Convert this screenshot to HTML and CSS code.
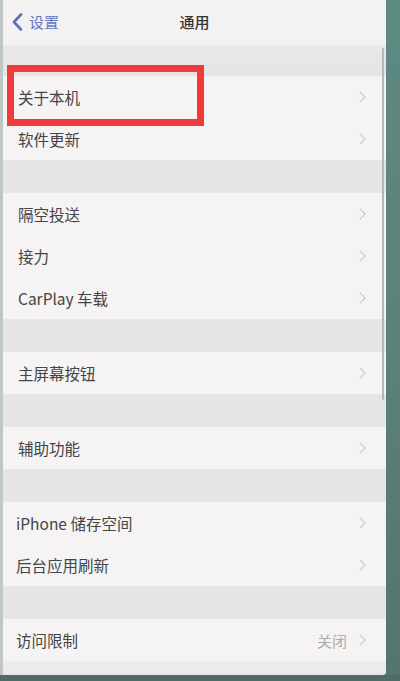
FILE: index.html
```html
<!DOCTYPE html>
<html lang="zh">
<head>
<meta charset="utf-8">
<title>通用</title>
<link rel="stylesheet" href="styles.css">
</head>
<body>
<div class="frame">
  <div class="edge"></div>
  <div class="screen">
    <header class="nav">
      <div class="back">
        <svg class="back-icon" width="11" height="18" viewBox="0 0 11 18"><path d="M9 1.5 L2 9 L9 16.5" fill="none" stroke="#5d6dc2" stroke-width="2.6" stroke-linecap="round" stroke-linejoin="round"/></svg>
        <span>设置</span>
      </div>
      <div class="title">通用</div>
    </header>
    <div class="content">
      <div class="gap first"></div>
      <div class="group">
        <div class="row"><span class="label">关于本机</span><span class="chev"></span></div>
        <div class="row"><span class="label">软件更新</span><span class="chev"></span></div>
      </div>
      <div class="gap"></div>
      <div class="group">
        <div class="row"><span class="label">隔空投送</span><span class="chev"></span></div>
        <div class="row"><span class="label">接力</span><span class="chev"></span></div>
        <div class="row"><span class="label">CarPlay 车载</span><span class="chev"></span></div>
      </div>
      <div class="gap"></div>
      <div class="group">
        <div class="row"><span class="label">主屏幕按钮</span><span class="chev"></span></div>
      </div>
      <div class="gap"></div>
      <div class="group">
        <div class="row"><span class="label">辅助功能</span><span class="chev"></span></div>
      </div>
      <div class="gap"></div>
      <div class="group">
        <div class="row"><span class="label tight">iPhone 储存空间</span><span class="chev"></span></div>
        <div class="row"><span class="label tight">后台应用刷新</span><span class="chev"></span></div>
      </div>
      <div class="gap"></div>
      <div class="group">
        <div class="row"><span class="label tight">访问限制</span><span class="value">关闭</span><span class="chev"></span></div>
      </div>
      <div class="gap last"></div>
    </div>
    <div class="scrollbar"></div>
    <div class="highlight"></div>
  </div>
  <div class="side"></div>
</div>
</body>
</html>
```
FILE: styles.css
```css
html, body {
  margin: 0;
  padding: 0;
}
body {
  width: 400px;
  height: 681px;
  overflow: hidden;
  background: #4f6b65;
  font-family: "Noto Sans CJK SC", "Noto Sans", sans-serif;
}
.frame {
  display: flex;
  height: 675px;
}
.edge {
  width: 3px;
  background: #bfc6c3;
}
.side {
  flex: 1;
  background: linear-gradient(#5e8a83, #5a7f78 60%, #55746e);
}
.screen {
  position: relative;
  width: 383px;
  height: 675px;
  background: #e7e5e8;
  display: flex;
  flex-direction: column;
  overflow: hidden;
  border-bottom-right-radius: 3px;
}
.nav {
  height: 45px;
  flex: none;
  background: #f3f1f1;
  position: relative;
  display: flex;
  align-items: center;
  justify-content: center;
}
.back {
  position: absolute;
  left: 9px;
  top: 12px;
  display: flex;
  align-items: center;
  gap: 6px;
  color: #6675c4;
  font-size: 15px;
  line-height: 20px;
}
.back-icon {
  display: block;
}
.title {
  font-size: 15px;
  font-weight: 500;
  color: #333335;
  line-height: 20px;
  margin-top: -2px;
}
.content {
  display: flex;
  flex-direction: column;
}
.gap {
  height: 33px;
  background: #e7e5e8;
}
.gap.first {
  height: 31px;
  background: linear-gradient(#eae8ea, #e5e3e6);
}
.gap.last {
  height: 12px;
  background: #ecebec;
}
.group {
  background: #f5f3f3;
  display: flex;
  flex-direction: column;
}
.row {
  height: 42px;
  display: flex;
  align-items: center;
  padding: 0 20px 0 15px;
  color: #444446;
  font-size: 15.5px;
}
.label {
  flex: 1;
}
.label.tight {
  margin-left: -2px;
}
.value {
  color: #adacae;
  font-size: 15px;
  margin-right: 9px;
}
.chev {
  width: 7px;
  height: 7px;
  border-top: 1.6px solid #c6c5c8;
  border-right: 1.6px solid #c6c5c8;
  transform: rotate(45deg);
  margin-right: 2px;
}
.scrollbar {
  position: absolute;
  left: 379px;
  top: 48px;
  width: 2px;
  height: 352px;
  background: #a9a9aa;
  border-radius: 1px;
  opacity: 0.8;
}
.highlight {
  position: absolute;
  left: 4px;
  top: 65px;
  width: 197px;
  height: 61px;
  box-sizing: border-box;
  border: 7px solid #f23a3c;
}
```
